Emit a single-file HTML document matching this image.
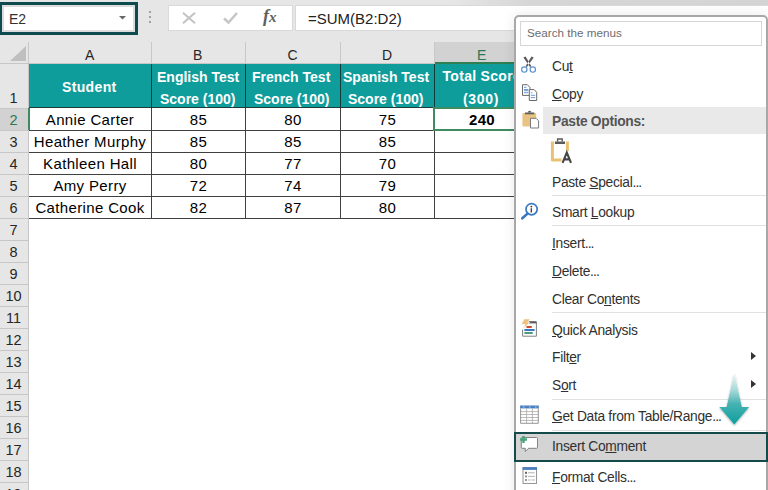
<!DOCTYPE html>
<html><head><meta charset="utf-8">
<style>
*{margin:0;padding:0;box-sizing:border-box}
html,body{width:768px;height:490px;overflow:hidden;background:#fff;font-family:"Liberation Sans",sans-serif}
.a{position:absolute}
svg{position:absolute;overflow:visible}
#top{left:0;top:0;width:768px;height:42px;background:#e6e6e6}
#namebox{left:-1px;top:1.5px;width:139px;height:33.5px;border:3px solid #0d4b4f;background:#fff}
#namebox .in{position:absolute;left:0;top:0;right:0;bottom:0;border:2px solid #dcdcdc}
.t{position:absolute;white-space:nowrap;line-height:1}
#colhdr{left:0;top:42px;width:768px;height:22px;background:#e6e6e6;border-bottom:1px solid #c6c6c6}
#rowhdr{left:0;top:42px;width:29px;height:448px;background:#e6e6e6;border-right:1px solid #c6c6c6}
.vl{position:absolute;width:1px;background:#c8c8c8}
.hl{position:absolute;height:1px;background:#c6c6c6}
.bk{position:absolute;background:#404040}
.hd{color:#fff;font-weight:bold;font-size:14px}
.cell{font-size:15px;color:#000;letter-spacing:0.35px}
.rn{font-size:14.5px;color:#262626;width:27px;text-align:center}
#menu{left:514px;top:14.5px;width:254px;height:490px;background:#fff;border:2.4px solid #a8a8a8;border-radius:5px;box-shadow:0 0 14px rgba(0,0,0,0.09)}
.mi{position:absolute;left:552px;font-size:13.8px;letter-spacing:-0.3px;color:#303030;white-space:nowrap;line-height:1}
.dots{letter-spacing:-0.9px}
.sep{position:absolute;left:552px;width:214px;height:1px;background:#e1e1e1}
u{text-decoration:underline;text-decoration-thickness:1px;text-underline-offset:0.6px}
</style></head><body>
<div class="a" id="top"></div>
<div class="a" style="left:300px;top:0;width:468px;height:5px;background:linear-gradient(to right,rgba(0,0,0,0) 0,rgba(0,0,0,0) 150px,rgba(0,0,0,0.07) 230px,rgba(0,0,0,0.08) 468px)"></div>
<!-- name box -->
<div class="a" id="namebox"><div class="in"></div></div>
<div class="t" style="left:9px;top:11.5px;font-size:14px;color:#333">E2</div>
<svg style="left:119px;top:15.5px" width="7" height="4"><path d="M0 0H7L3.5 3.5Z" fill="#666"/></svg>
<!-- dots -->
<div class="a" style="left:149px;top:11px;width:2px;height:2px;background:#a0a0a0"></div>
<div class="a" style="left:149px;top:16px;width:2px;height:2px;background:#a0a0a0"></div>
<div class="a" style="left:149px;top:21px;width:2px;height:2px;background:#a0a0a0"></div>
<!-- formula boxes -->
<div class="a" style="left:168px;top:5px;width:125px;height:26px;background:#fff;border:1px solid #d9d9d9"></div>
<div class="a" style="left:295px;top:5px;width:480px;height:26px;background:#fff;border:1px solid #d9d9d9"></div>
<svg style="left:182px;top:12px" width="14" height="12"><path d="M1 0.8L13 11.2M13 0.8L1 11.2" stroke="#c2c2c2" stroke-width="2" fill="none"/></svg>
<svg style="left:223px;top:12px" width="15" height="12"><path d="M1 6.5L5.5 10.5L14 1" stroke="#c6c6c6" stroke-width="2.6" fill="none"/></svg>
<div class="t" style="left:263px;top:7px;font-family:'Liberation Serif',serif;font-style:italic;font-weight:bold;font-size:18px;color:#606060">f<span style="font-size:15px;margin-left:0px">x</span></div>
<div class="t" style="left:308px;top:11px;font-size:15px;color:#222">=SUM(B2:D2)</div>

<!-- headers -->
<div class="a" id="colhdr"></div>
<div class="a" style="left:435px;top:42px;width:100px;height:22px;background:#d2d2d2;border-bottom:2px solid #2f7f52"></div>
<div class="a" id="rowhdr"></div>
<div class="a" style="left:0;top:108px;width:29px;height:22px;background:#d2d2d2;border-right:1.5px solid #3f8a62"></div>
<div class="hl" style="left:0;top:63px;width:29px"></div>
<svg style="left:10px;top:46px" width="16" height="15"><path d="M0 15H16V0Z" fill="#bfbfbf"/></svg>
<!-- col header separators -->
<div class="vl" style="left:151px;top:42px;height:22px"></div>
<div class="vl" style="left:245px;top:42px;height:22px"></div>
<div class="vl" style="left:340px;top:42px;height:22px"></div>
<div class="vl" style="left:434px;top:42px;height:22px"></div>
<div class="t" style="left:85px;top:48px;font-size:14px;color:#262626">A</div>
<div class="t" style="left:193px;top:48px;font-size:14px;color:#262626">B</div>
<div class="t" style="left:287.5px;top:48px;font-size:14px;color:#262626">C</div>
<div class="t" style="left:382px;top:48px;font-size:14px;color:#262626">D</div>
<div class="t" style="left:477px;top:48px;font-size:14px;color:#2a7752">E</div>

<div class="hl" style="left:0;top:130px;width:28px"></div>
<div class="t rn" style="left:0;top:113px;color:#2a7752">2</div>
<div class="hl" style="left:0;top:152px;width:28px"></div>
<div class="t rn" style="left:0;top:135px;">3</div>
<div class="hl" style="left:0;top:174px;width:28px"></div>
<div class="t rn" style="left:0;top:157px;">4</div>
<div class="hl" style="left:0;top:196px;width:28px"></div>
<div class="t rn" style="left:0;top:179px;">5</div>
<div class="hl" style="left:0;top:218px;width:28px"></div>
<div class="t rn" style="left:0;top:201px;">6</div>
<div class="hl" style="left:0;top:240px;width:28px"></div>
<div class="t rn" style="left:0;top:223px;">7</div>
<div class="hl" style="left:0;top:262px;width:28px"></div>
<div class="t rn" style="left:0;top:245px;">8</div>
<div class="hl" style="left:0;top:284px;width:28px"></div>
<div class="t rn" style="left:0;top:267px;">9</div>
<div class="hl" style="left:0;top:306px;width:28px"></div>
<div class="t rn" style="left:0;top:289px;">10</div>
<div class="hl" style="left:0;top:328px;width:28px"></div>
<div class="t rn" style="left:0;top:311px;">11</div>
<div class="hl" style="left:0;top:350px;width:28px"></div>
<div class="t rn" style="left:0;top:333px;">12</div>
<div class="hl" style="left:0;top:372px;width:28px"></div>
<div class="t rn" style="left:0;top:355px;">13</div>
<div class="hl" style="left:0;top:394px;width:28px"></div>
<div class="t rn" style="left:0;top:377px;">14</div>
<div class="hl" style="left:0;top:416px;width:28px"></div>
<div class="t rn" style="left:0;top:399px;">15</div>
<div class="hl" style="left:0;top:438px;width:28px"></div>
<div class="t rn" style="left:0;top:421px;">16</div>
<div class="hl" style="left:0;top:460px;width:28px"></div>
<div class="t rn" style="left:0;top:443px;">17</div>
<div class="hl" style="left:0;top:482px;width:28px"></div>
<div class="t rn" style="left:0;top:465px;">18</div>
<div class="hl" style="left:0;top:504px;width:28px"></div>
<div class="t rn" style="left:0;top:487px;">19</div>
<div class="hl" style="left:0;top:526px;width:28px"></div>
<div class="t rn" style="left:0;top:509px;">20</div>
<div class="hl" style="left:0;top:108px;width:28px"></div>
<div class="t rn" style="left:0;top:91px">1</div>

<!-- teal header -->
<div class="a" style="left:29px;top:64px;width:490px;height:44px;background:#0f9d9c"></div>
<!-- table borders -->
<div class="bk" style="left:151px;top:64px;width:1px;height:155px"></div>
<div class="bk" style="left:245px;top:64px;width:1px;height:155px"></div>
<div class="bk" style="left:340px;top:64px;width:1px;height:155px"></div>
<div class="bk" style="left:434px;top:64px;width:1px;height:155px"></div>
<div class="bk" style="left:29px;top:107px;width:490px;height:1px;background:#1c3c3c"></div>
<div class="bk" style="left:29px;top:130px;width:490px;height:1px"></div>
<div class="bk" style="left:29px;top:152px;width:490px;height:1px"></div>
<div class="bk" style="left:29px;top:174px;width:490px;height:1px"></div>
<div class="bk" style="left:29px;top:196px;width:490px;height:1px"></div>
<div class="bk" style="left:29px;top:218px;width:490px;height:1px"></div>
<div class="a" style="left:151px;top:64px;width:1px;height:44px;background:#143a3a"></div><div class="a" style="left:245px;top:64px;width:1px;height:44px;background:#143a3a"></div><div class="a" style="left:340px;top:64px;width:1px;height:44px;background:#143a3a"></div><div class="a" style="left:434px;top:64px;width:1px;height:44px;background:#143a3a"></div>
<!-- selected cell E2 -->
<div class="a" style="left:433px;top:107px;width:96px;height:24px;border:2px solid #3f8c63"></div>
<div class="a" style="left:28px;top:108px;width:1.5px;height:22px;background:#3f8a62"></div>

<!-- header text -->
<div class="t hd" style="left:62px;top:80px;letter-spacing:0.35px">Student</div>
<div class="t hd" style="left:157px;top:69.5px">English Test</div>
<div class="t hd" style="left:160px;top:92px">Score (100)</div>
<div class="t hd" style="left:252px;top:69.5px">French Test</div>
<div class="t hd" style="left:254px;top:92px">Score (100)</div>
<div class="t hd" style="left:343px;top:69.5px">Spanish Test</div>
<div class="t hd" style="left:348px;top:92px">Score (100)</div>
<div class="t hd" style="left:442.5px;top:69px;letter-spacing:0.3px">Total Score</div>
<div class="t hd" style="left:463px;top:92px;letter-spacing:0.7px">(300)</div>

<div class="t cell" style="left:29px;top:112px;width:122px;text-align:center">Annie Carter</div>
<div class="t cell" style="left:152px;top:112px;width:93px;text-align:center">85</div>
<div class="t cell" style="left:246px;top:112px;width:94px;text-align:center">80</div>
<div class="t cell" style="left:341px;top:112px;width:93px;text-align:center">75</div>
<div class="t cell" style="left:29px;top:134px;width:122px;text-align:center">Heather Murphy</div>
<div class="t cell" style="left:152px;top:134px;width:93px;text-align:center">85</div>
<div class="t cell" style="left:246px;top:134px;width:94px;text-align:center">85</div>
<div class="t cell" style="left:341px;top:134px;width:93px;text-align:center">85</div>
<div class="t cell" style="left:29px;top:156px;width:122px;text-align:center">Kathleen Hall</div>
<div class="t cell" style="left:152px;top:156px;width:93px;text-align:center">80</div>
<div class="t cell" style="left:246px;top:156px;width:94px;text-align:center">77</div>
<div class="t cell" style="left:341px;top:156px;width:93px;text-align:center">70</div>
<div class="t cell" style="left:29px;top:178px;width:122px;text-align:center">Amy Perry</div>
<div class="t cell" style="left:152px;top:178px;width:93px;text-align:center">72</div>
<div class="t cell" style="left:246px;top:178px;width:94px;text-align:center">74</div>
<div class="t cell" style="left:341px;top:178px;width:93px;text-align:center">79</div>
<div class="t cell" style="left:29px;top:200px;width:122px;text-align:center">Catherine Cook</div>
<div class="t cell" style="left:152px;top:200px;width:93px;text-align:center">82</div>
<div class="t cell" style="left:246px;top:200px;width:94px;text-align:center">87</div>
<div class="t cell" style="left:341px;top:200px;width:93px;text-align:center">80</div>
<div class="t cell" style="left:435px;top:112px;width:94px;text-align:center;font-weight:bold">240</div>

<!-- context menu -->
<div class="a" id="menu"></div>
<div class="a" style="left:520px;top:20.5px;width:242px;height:25.5px;border:1px solid #d6d6d6"></div>
<div class="t" style="left:527px;top:26.5px;font-size:11.7px;color:#6e6e6e">Search the menus</div>

<div class="a" style="left:543px;top:107px;width:223px;height:27px;background:#e9e9e9"></div>
<div class="a" style="left:514px;top:432px;width:254px;height:30px;background:#d4d4d4;border:2.7px solid #144a4a"></div>

<div class="mi" style="top:59.5px">Cu<u>t</u></div>
<div class="mi" style="top:87.5px"><u>C</u>opy</div>
<div class="mi" style="top:115px;font-weight:bold;color:#555">Paste Options:</div>
<div class="mi" style="top:176px">Paste <u>S</u>pecial<span style="letter-spacing:-0.9px">...</span></div>
<div class="sep" style="top:195px"></div>
<div class="mi" style="top:206px">Smart <u>L</u>ookup</div>
<div class="sep" style="top:225px"></div>
<div class="mi" style="top:237px"><u>I</u>nsert<span style="letter-spacing:-0.9px">...</span></div>
<div class="mi" style="top:265px"><u>D</u>elete<span style="letter-spacing:-0.9px">...</span></div>
<div class="mi" style="top:293px">Clear Co<u>n</u>tents</div>
<div class="sep" style="top:312px"></div>
<div class="mi" style="top:323.5px"><u>Q</u>uick Analysis</div>
<div class="mi" style="top:351px">Filt<u>e</u>r</div>
<div class="mi" style="top:379px">S<u>o</u>rt</div>
<div class="sep" style="top:399px"></div>
<div class="mi" style="top:409.5px"><u>G</u>et Data from Table/Range<span style="letter-spacing:-0.9px">...</span></div>
<div class="sep" style="top:430px"></div>
<div class="mi" style="top:440px">Insert Co<u>m</u>ment</div>
<div class="mi" style="top:471px"><u>F</u>ormat Cells<span style="letter-spacing:-0.9px">...</span></div>

<svg style="left:751px;top:352px" width="5" height="8"><path d="M0 0L5 4L0 8Z" fill="#333"/></svg>
<svg style="left:751px;top:380px" width="5" height="8"><path d="M0 0L5 4L0 8Z" fill="#333"/></svg>

<!-- icons -->
<!-- scissors at 516,52 -->
<svg style="left:516px;top:52px" width="30" height="30">
 <path d="M7.4 5.4L9.6 4.4L15.4 14.2L14 14.9ZM17.7 5.4L15.5 4.4L9.6 14.2L11 14.9Z" fill="#5a5a5a"/>
 <circle cx="8.3" cy="17.5" r="2.7" stroke="#5a90cf" stroke-width="1.15" fill="none"/>
 <circle cx="16.8" cy="17.5" r="2.7" stroke="#5a90cf" stroke-width="1.15" fill="none"/>
</svg>
<!-- copy at 516,80 -->
<svg style="left:516px;top:80px" width="30" height="30">
 <path d="M6.5 4.7H11.3L14 7.4V15.4H6.5Z" stroke="#6a6a6a" stroke-width="1" fill="#fff"/>
 <path d="M8 7.3H10.5M8 9.5H12.3M8 10.7H12.3M8 12.7H12.3" stroke="#5b8fd0" stroke-width="0.9"/>
 <path d="M13.3 9.6H18.1L20.7 12.3V20.5H13.3Z" stroke="#6a6a6a" stroke-width="1" fill="#fff"/>
 <path d="M14.8 12.8H16.5M14.8 15.3H19.2M14.8 17.6H19.2" stroke="#5b8fd0" stroke-width="0.9"/>
</svg>
<!-- paste at 516,106 -->
<svg style="left:516px;top:106px" width="30" height="30">
 <rect x="6.4" y="7" width="13.8" height="13.5" rx="1" fill="#eac384"/>
 <path d="M9 6.5H18.3V8.3H9Z" fill="#5e5e5e"/>
 <path d="M11.8 6.5Q11.8 4.8 13.6 4.8Q15.4 4.8 15.4 6.5Z" fill="#5e5e5e"/>
 <path d="M14.5 12.3H20.1L22.6 14.8V22H14.5Z" stroke="#7a7a7a" stroke-width="1" fill="#fff"/>
</svg>
<!-- paste A at 546,136 -->
<svg style="left:546px;top:136px" width="30" height="30">
 <path d="M6.4 5.5V24H15.6M21.4 5.5V15" stroke="#e9c173" stroke-width="3" fill="none" stroke-linejoin="round"/>
 <path d="M8.9 5.5H19V8H8.9Z" fill="#5a5a5a"/>
 <path d="M11.6 5.6V3H16.2V5.6" stroke="#5a5a5a" stroke-width="1.4" fill="none"/>
 <path d="M16.6 26.9L20.8 16.6L25 26.9M18.2 23.4H23.4" stroke="#454545" stroke-width="2.1" fill="none"/>
</svg>
<!-- smart lookup at 516,196 -->
<svg style="left:516px;top:196px" width="30" height="30">
 <circle cx="15.6" cy="13.2" r="5.6" stroke="#3a78c0" stroke-width="1.7" fill="#fff"/>
 <path d="M11.5 17.6L6.3 22.3" stroke="#3a78c0" stroke-width="2.6" stroke-linecap="round"/>
 <circle cx="15.3" cy="10.6" r="0.9" fill="#333"/>
 <path d="M15.3 12.3V16.4" stroke="#333" stroke-width="1.3"/>
</svg>
<!-- quick analysis at 516,313 -->
<svg style="left:516px;top:313px" width="30" height="30">
 <path d="M6.6 16V23.2H20.4V8.8H12.8" stroke="#808080" stroke-width="1" fill="none"/>
 <path d="M12.5 9.4H20.4" stroke="#5e5e5e" stroke-width="2"/>
 <rect x="10.2" y="12.9" width="5.8" height="2.2" rx="1" fill="#d24a2c"/>
 <rect x="8.1" y="16" width="10.8" height="2.1" rx="1" fill="#3b78c2"/>
 <rect x="8.1" y="19.1" width="8.9" height="2" rx="1" fill="#4d9c7a"/>
 <path d="M8.2 5.9H14.1L11.8 9.4H13.8L6.4 16.6L9.2 11.3H5.2Z" fill="#eec27c" stroke="#fff" stroke-width="0.6"/>
</svg>
<!-- get data table at 514,400 -->
<svg style="left:514px;top:400px" width="30" height="30">
 <rect x="6.1" y="5.5" width="18.7" height="2.9" fill="#4a7fc1"/>
 <path d="M6.6 11.6H24.3M6.6 14.5H24.3M6.6 17.5H24.3M6.6 20.4H24.3M12.6 8.4V23.3M18.4 8.4V23.3" stroke="#a8a8a8" stroke-width="0.8" fill="none"/><path d="M6.6 8.4V23.3H24.3V8.4" stroke="#8a8a8a" stroke-width="0.9" fill="none"/><path d="M9 7H10.5M15 7H16.5M21 7H22.5" stroke="#dfe8f4" stroke-width="0.8"/>
</svg>
<!-- insert comment at 514,430 -->
<svg style="left:514px;top:430px" width="30" height="30">
 <path d="M8 7.5H22.5Q23.5 7.5 23.5 8.5V17.3Q23.5 18.3 22.5 18.3H14.5L11.3 21.5V18.3H8Q7.3 18.3 7.3 17.3V8.5Q7.3 7.5 8 7.5Z" stroke="#777" stroke-width="0.9" fill="#fff"/>
 <path d="M9.5 6.1V13M6.1 9.5H13" stroke="#4aa37a" stroke-width="2.4"/>
</svg>
<!-- format cells at 514,458 -->
<svg style="left:514px;top:458px" width="30" height="30">
 <rect x="9" y="9.6" width="13.6" height="15.8" stroke="#888" stroke-width="0.9" fill="#fff"/>
 <rect x="8.6" y="9.2" width="14.4" height="2.7" fill="#4a7fc1"/>
 <rect x="11" y="13.8" width="2" height="2" fill="#666"/>
 <rect x="11" y="17.4" width="2" height="2" fill="#999"/>
 <rect x="11" y="21" width="2" height="2" fill="#999"/>
 <path d="M14 14.8H20.8M14 18.4H20.8M14 22H16.6M17.6 22H20.8" stroke="#aaa" stroke-width="0.9"/>
</svg>
<!-- teal arrow -->
<svg style="left:710px;top:366px" width="50" height="65">
 <defs><linearGradient id="ag" x1="0" y1="0" x2="0" y2="1"><stop offset="0" stop-color="#eef8f8"/><stop offset="0.35" stop-color="#a2d6d6"/><stop offset="0.6" stop-color="#45b2b2"/><stop offset="1" stop-color="#0f9e9e"/></linearGradient>
 <filter id="sh" x="-30%" y="-30%" width="160%" height="160%"><feGaussianBlur in="SourceAlpha" stdDeviation="1.2"/><feOffset dx="0" dy="1"/><feComponentTransfer><feFuncA type="linear" slope="0.35"/></feComponentTransfer><feMerge><feMergeNode/><feMergeNode in="SourceGraphic"/></feMerge></filter></defs>
 <path d="M24.3 7.3L31.8 41H39.1L24.3 58.4L9.3 41H16.6Z" fill="url(#ag)" filter="url(#sh)"/>
</svg>

</body></html>
